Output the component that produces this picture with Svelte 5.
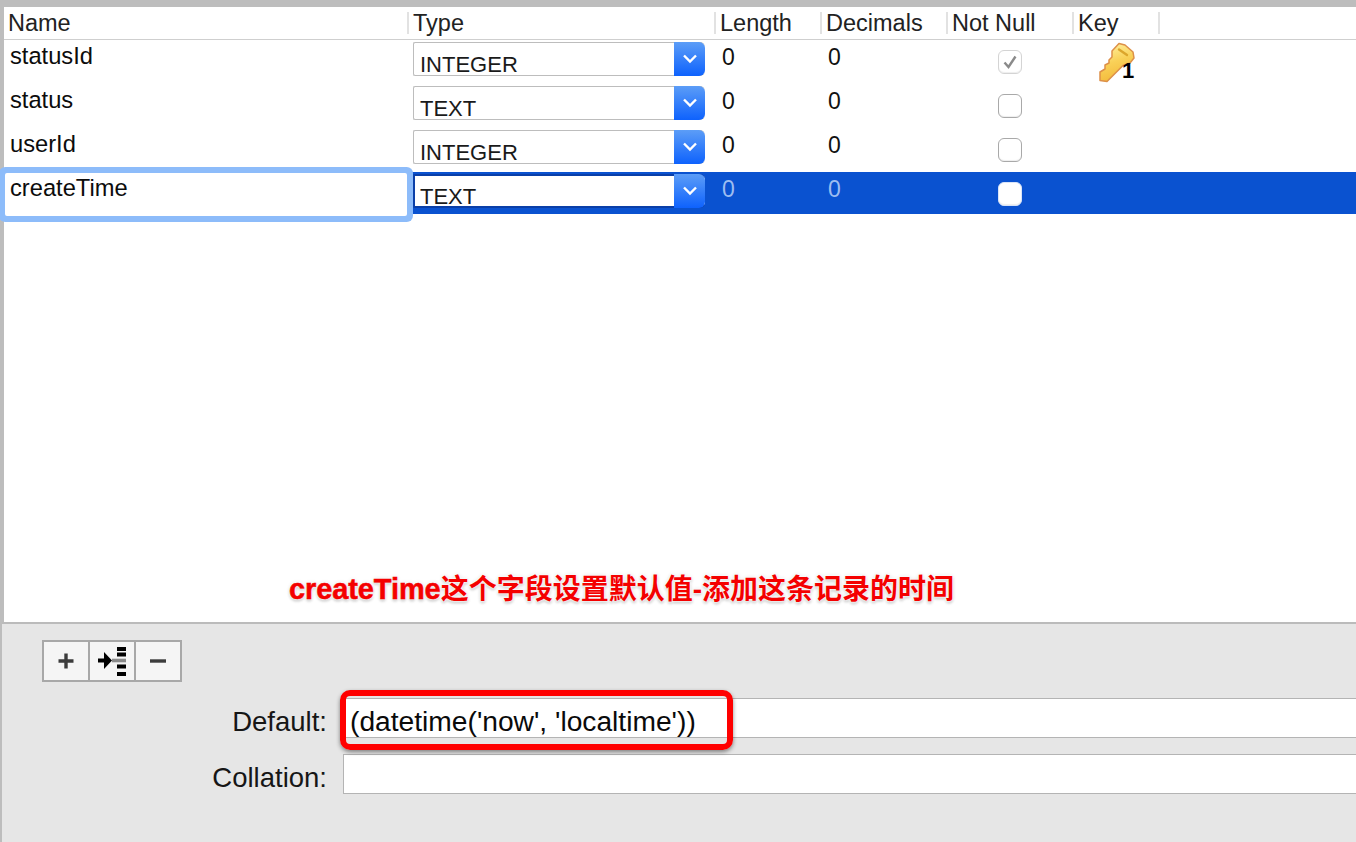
<script>
  const rows = [
    { name: 'statusId', type: 'INTEGER', checked: true, key: true },
    { name: 'status', type: 'TEXT' },
    { name: 'userId', type: 'INTEGER' },
    { name: 'createTime', type: 'TEXT', selected: true }
  ];
  const heads = ['Name', 'Type', 'Length', 'Decimals', 'Not Null', 'Key'];
</script>

<div class="window">
  <div class="topbar"></div>
  <div class="main">
    <div class="grid head">
      {#each heads as h}<div class="hcell">{h}</div>{/each}
      <div></div>
    </div>
    {#each rows as r}
      <div class="grid row" class:selected={r.selected}>
        <div class="name" class:focus={r.selected}>{r.name}</div>
        <div class="typecell">
          <div class="select">
            <span class="value">{r.type}</span>
            <span class="arrow">
              <svg width="14" height="10" viewBox="0 0 14 10"><path d="M1 1.500 7 7.500 13 1.500" fill="none" stroke="#fff" stroke-width="2.400"/></svg>
            </span>
          </div>
        </div>
        <div class="num">0</div>
        <div class="num">0</div>
        <div class="checkcell">
          <span class="check" class:on={r.checked}>
            {#if r.checked}
              <svg width="16" height="16" viewBox="0 0 16 16"><path d="M2.500 8.500 6.500 13 13.500 2.500" fill="none" stroke="#8a8a8a" stroke-width="2.400"/></svg>
            {/if}
          </span>
        </div>
        <div class="keycell">
          {#if r.key}
            <span class="key">
              <svg width="37" height="41" viewBox="0 0 37 41">
                <defs>
                  <linearGradient id="kg" x1="0.35" y1="0" x2="0.65" y2="1">
                    <stop offset="0" stop-color="#ffef9c"/>
                    <stop offset="0.45" stop-color="#f9d158"/>
                    <stop offset="1" stop-color="#f2b636"/>
                  </linearGradient>
                </defs>
                <path d="M21 1.500 L27 3 L35 10 L36 16 L32 21 L25 23.500 L9 39.500 L2 38.500 L2 30 L7 27 L7 23 L11 21 L11 18 L14 15 L14 9 Z" fill="url(#kg)" stroke="#dd9048" stroke-width="1.500" stroke-linejoin="round"/>
                <path d="M21 7.500 L29 13" stroke="#dca62c" stroke-width="2.400" stroke-linecap="round"/>
              </svg>
              <b>1</b>
            </span>
          {/if}
        </div>
        <div></div>
      </div>
    {/each}
  </div>

  <div class="panel">
    <div class="buttons">
      <button aria-label="add">
        <svg width="18" height="18" viewBox="0 0 18 18"><path d="M9 1.500v15M1.500 9h15" stroke="#3c3c3c" stroke-width="3.400"/></svg>
      </button>
      <button aria-label="insert">
        <svg width="32" height="30" viewBox="0 0 32 30">
          <path d="M2 12.500h6V6l8 8.500-8 8.500v-6.500H2z" fill="#000"/>
          <path d="M16 14.500h14" stroke="#8a8a8a" stroke-width="3.600"/>
          <path d="M21 3h9M21 8.500h9M21 20.500h9M21 28h9" stroke="#000" stroke-width="4"/>
        </svg>
      </button>
      <button aria-label="remove">
        <svg width="18" height="18" viewBox="0 0 18 18"><path d="M1 9h16" stroke="#3c3c3c" stroke-width="3.400"/></svg>
      </button>
    </div>
    <div class="form">
      <span class="label">Default:</span>
      <div class="input">(datetime('now', 'localtime'))</div>
      <span class="label">Collation:</span>
      <div class="input"></div>
    </div>
    <div class="redbox"></div>
  </div>

  <div class="note"><span class="latin">createTime</span>这个字段设置默认值-添加这条记录的时间</div>
</div>

<style>
  :global(body) { margin: 0; }
  .window {
    position: relative;
    width: 1356px;
    height: 842px;
    overflow: hidden;
    display: flex;
    flex-direction: column;
    background: #bdbdbd;
    font-family: "Liberation Sans", Arial, sans-serif;
    color: #111;
  }
  .topbar { height: 7px; flex: none; }
  .main {
    flex: 1;
    margin-left: 4px;
    background: #fff;
  }
  .grid {
    display: grid;
    grid-template-columns: 404px 307px 106px 126px 126px 86px 1fr;
  }
  .head {
    height: 32px;
    border-bottom: 1px solid #cfcfcf;
    font-size: 23.500px;
    color: #222;
  }
  .hcell {
    border-right: 2px solid #e2e2e2;
    margin: 5px -1px 0 0;
    height: 22px;
    line-height: 22px;
    padding-left: 4px;
    box-sizing: border-box;
    white-space: nowrap;
  }
  .hcell + .hcell { padding-left: 5px; }
  .row { height: 44px; font-size: 23.700px; }
  .row.selected { height: 42px; background: #0a52d0; }
  .name {
    padding: 3px 0 0 6px;
    line-height: 26px;
    color: #0c0c0c;
  }
  .name.focus {
    position: relative;
    z-index: 1;
    background: #fff;
    height: 43px;
    box-sizing: border-box;
    margin: 1px 1px -2px 1px;
    padding: 2px 0 0 5px;
    border-radius: 2px;
    box-shadow: 0 0 0 6px #8dbcfa;
  }
  .typecell { padding: 2px 0 0 5px; }
  .select {
    width: 292px;
    height: 34px;
    box-sizing: border-box;
    display: flex;
    background: #fff;
    border: 1px solid #bdbdbd;
    border-right: 0;
    border-radius: 2px 5px 5px 2px;
    font-size: 22px;
  }
  .selected .select {
    border-color: #0a3fa8;
    border-width: 2px 0 2px 2px;
  }
  .value { flex: 1; padding: 9px 0 0 6px; line-height: 26px; color: #1a1a1a; }
  .selected .value { padding: 8px 0 0 5px; }
  .arrow {
    width: 31px;
    margin: -1px 0;
    display: flex;
    align-items: center;
    justify-content: center;
    background: linear-gradient(#5c9df7, #0e62fd);
    border-radius: 0 6px 6px 0;
  }
  .selected .arrow { margin: -2px 0; }
  .num { padding: 4px 0 0 7px; line-height: 26px; font-size: 23px; }
  .selected .num { color: #9dbdf0; }
  .checkcell { display: flex; justify-content: center; padding-top: 10px; align-items: flex-start; }
  .check {
    width: 24px;
    height: 24px;
    box-sizing: border-box;
    border: 1.500px solid #a9a9a9;
    border-radius: 6px;
    background: #fff;
    display: flex;
    align-items: center;
    justify-content: center;
    box-shadow: inset 0 -1px 1px #eee;
  }
  .check.on { border-color: #d4d4d4; }
  .selected .check { border-color: #d9e4f7; }
  .keycell { padding: 2px 0 0 25px; }
  .key { position: relative; display: block; width: 37px; height: 41px; }
  .key svg { display: block; }
  .key b {
    position: absolute;
    left: 24px;
    top: 17px;
    font-size: 22px;
    line-height: 24px;
    font-weight: 700;
    color: #000;
  }
  .panel {
    position: relative;
    flex: none;
    height: 220px;
    box-sizing: border-box;
    margin-left: 2px;
    background: #e6e6e6;
    border-top: 2px solid #bbb;
    padding: 16px 0 0 40px;
  }
  .buttons {
    display: flex;
    width: 140px;
    height: 42px;
    box-sizing: border-box;
    border: 2px solid #a8a8a8;
    background: #f5f5f5;
  }
  .buttons button {
    flex: 1;
    border: 0;
    padding: 0;
    background: none;
    display: flex;
    align-items: center;
    justify-content: center;
  }
  .buttons button + button { border-left: 2px solid #a8a8a8; }
  .form {
    margin: 16px 0 0 -40px;
    display: grid;
    grid-template-columns: 325px 1fr;
    grid-auto-rows: 40px;
    column-gap: 16px;
    row-gap: 16px;
    font-size: 28.200px;
  }
  .label { text-align: right; line-height: 47px; color: #161616; font-size: 27.500px; }
  .input {
    height: 40px;
    margin-right: -20px;
    box-sizing: border-box;
    background: #fff;
    border: 1px solid #b4b4b4;
    padding-left: 6px;
    line-height: 44px;
    color: #0a0a0a;
  }
  .redbox {
    position: absolute;
    left: 338px;
    top: 66px;
    width: 393px;
    height: 60px;
    box-sizing: border-box;
    border: 6px solid #ff0000;
    border-radius: 10px;
    box-shadow: 0 2px 4px rgba(0, 0, 0, 0.45);
  }
  .note {
    position: absolute;
    left: 289px;
    top: 571px;
    font-size: 28px;
    line-height: 36px;
    font-weight: 700;
    white-space: nowrap;
    color: #f40000;
    font-family: "Liberation Sans", "Noto Sans CJK SC", sans-serif;
    text-shadow: 0 0 2px #fff, 0 0 3px #fff, 0 0 4px #ddd, 0 2px 3px #bbb;
  }
  .latin {
    font-size: 29px;
    letter-spacing: -0.100px;
    -webkit-text-stroke: 0.500px #f40000;
  }
</style>
